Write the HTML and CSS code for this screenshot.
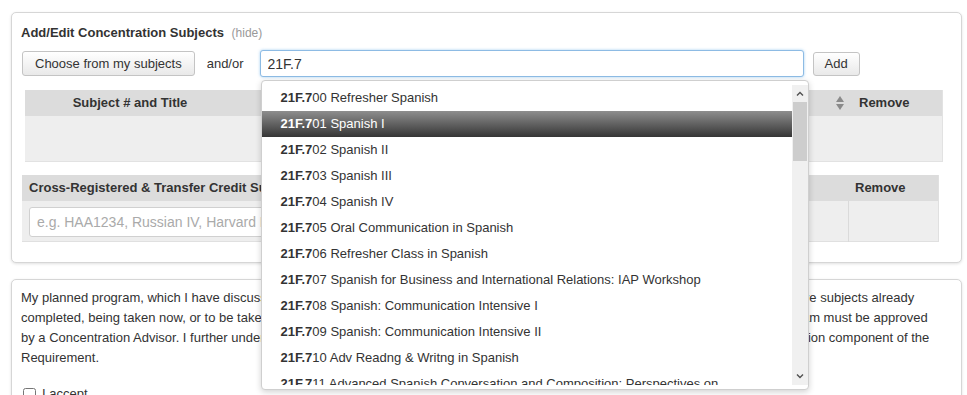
FILE: index.html
```html
<!DOCTYPE html>
<html lang="en">
<head>
  <meta charset="UTF-8" />
  <title>Concentration Proposal</title>
  <link rel="stylesheet" href="styles.css">
</head>
<body>
  <div class="panel subjects-panel">
    <div class="panel-title">Add/Edit Concentration Subjects <a class="hide-link">(hide)</a></div>

    <div class="add-row">
      <button class="btn choose-btn">Choose from my subjects</button>
      <span class="andor">and/or</span>
      <div class="search-wrap">
        <input class="search-input" type="text" value="21F.7" />
        <!-- autocomplete menu -->
        <div class="suggest">
          <ul class="suggest-list">
            <li><b>21F.7</b>00 Refresher Spanish</li>
            <li class="active"><b>21F.7</b>01 Spanish I</li>
            <li><b>21F.7</b>02 Spanish II</li>
            <li><b>21F.7</b>03 Spanish III</li>
            <li><b>21F.7</b>04 Spanish IV</li>
            <li><b>21F.7</b>05 Oral Communication in Spanish</li>
            <li><b>21F.7</b>06 Refresher Class in Spanish</li>
            <li><b>21F.7</b>07 Spanish for Business and International Relations: IAP Workshop</li>
            <li><b>21F.7</b>08 Spanish: Communication Intensive I</li>
            <li><b>21F.7</b>09 Spanish: Communication Intensive II</li>
            <li><b>21F.7</b>10 Adv Readng &amp; Writng in Spanish</li>
            <li><b>21F.7</b>11 Advanced Spanish Conversation and Composition: Perspectives on Contemporary Culture</li>
            <li><b>21F.7</b>12 Advanced Spanish Conversation and Composition</li>
          </ul>
          <div class="scrollbar">
            <div class="sb-btn">
              <svg width="8" height="5" viewBox="0 0 8 5"><polyline points="1,4.5 4,1.5 7,4.5" fill="none" stroke="#505050" stroke-width="1.4"/></svg>
            </div>
            <div class="sb-thumb"></div>
            <div class="sb-track"></div>
            <div class="sb-btn">
              <svg width="8" height="5" viewBox="0 0 8 5"><polyline points="1,0.5 4,3.5 7,0.5" fill="none" stroke="#505050" stroke-width="1.4"/></svg>
            </div>
          </div>
        </div>
      </div>
      <button class="btn add-btn">Add</button>
    </div>

    <table class="grid subj-table">
      <colgroup>
        <col style="width:210px"><col style="width:230px"><col style="width:200px"><col style="width:187px"><col style="width:90px">
      </colgroup>
      <tr>
        <th>Subject # and Title</th>
        <th>Term</th>
        <th>Units</th>
        <th class="sortable">
          <svg class="sort-icon" width="10" height="16" viewBox="0 0 10 16"><polygon points="5,1 9,7 1,7" fill="#8a8a8a"/><polygon points="1,9 9,9 5,15" fill="#8a8a8a"/></svg>
          Status
        </th>
        <th class="left">Remove</th>
      </tr>
      <tr class="empty-row">
        <td></td><td></td><td></td><td></td><td></td>
      </tr>
    </table>

    <table class="grid xreg-table">
      <colgroup>
        <col style="width:826px"><col style="width:90px">
      </colgroup>
      <tr>
        <th class="left">Cross-Registered &amp; Transfer Credit Subjects</th>
        <th class="left">Remove</th>
      </tr>
      <tr>
        <td class="xreg-cell"><input class="xreg-input" type="text" placeholder="e.g. HAA1234, Russian IV, Harvard Ec 1010a, Wellesley ..." /></td>
        <td class="remove-cell"></td>
      </tr>
    </table>
  </div>

  <div class="panel accept-panel">
    <p>My planned program, which I have discussed with my Concentration Advisor and outlined in this proposal form, includes each of the above subjects already completed, being taken now, or to be taken in future terms at MIT or Harvard. I understand that any later change or addition to this program must be approved by a Concentration Advisor. I further understand that I must also satisfactorily complete the written and oral communication and presentation component of the Requirement.</p>
    <label class="accept"><input type="checkbox" /> I accept</label>
  </div>
</body>
</html>
```

FILE: styles.css
```css
body {
  margin: 0;
  padding: 12px 5px 0 11px;
  font-family: "Liberation Sans", Arial, sans-serif;
  font-size: 13px;
  color: #333;
  background: #fff;
}
.panel {
  width: 951px;
  box-sizing: border-box;
  border: 1px solid #d6d6d6;
  border-radius: 5px;
  box-shadow: 0 1px 3px rgba(0,0,0,0.12);
  background: #fff;
}
.subjects-panel {
  padding: 11px 10px 20px 9px;
}
.panel-title {
  font-weight: bold;
  line-height: 18px;
}
.hide-link {
  font-weight: normal;
  font-size: 12px;
  color: #999;
  margin-left: 4px;
}
.add-row {
  display: flex;
  align-items: center;
  margin-top: 8px;
}
.btn {
  height: 25px;
  padding: 0 12px;
  font-family: inherit;
  font-size: 13px;
  color: #333;
  background: linear-gradient(#ffffff, #e9e9e9);
  border: 1px solid #c4c4c4;
  border-radius: 3px;
  cursor: pointer;
}
.choose-btn {
  margin-left: 1px;
}
.andor {
  margin: 0 16px 0 12px;
}
.search-wrap {
  position: relative;
}
.search-input {
  display: block;
  width: 544px;
  height: 27px;
  box-sizing: border-box;
  padding: 0 7px;
  font-family: inherit;
  font-size: 14px;
  color: #333;
  border: 1px solid #8dbbe4;
  border-radius: 3px;
  box-shadow: 0 0 3px rgba(102,175,233,0.6);
  outline: none;
}
.add-btn {
  height: 24px;
  margin-left: 9px;
  padding: 0 11px;
}

/* autocomplete */
.suggest {
  position: absolute;
  left: 1px;
  top: 30px;
  width: 548px;
  height: 310px;
  box-sizing: border-box;
  padding: 4px 0;
  display: flex;
  background: #fff;
  border: 1px solid #cfcfcf;
  border-radius: 4px;
  box-shadow: 0 2px 6px rgba(0,0,0,0.18);
  z-index: 5;
}
.suggest-list {
  flex: 1;
  margin: 0;
  padding: 0;
  list-style: none;
  overflow: hidden;
}
.suggest-list li {
  min-height: 26px;
  line-height: 26px;
  padding: 0 12px 0 19px;
  color: #333;
}
.suggest-list b {
  color: #333;
}
.suggest-list li.active {
  background: linear-gradient(#8e8e8e, #353535);
  color: #fff;
}
.suggest-list li.active b {
  color: #fff;
}
.scrollbar {
  width: 16px;
  display: flex;
  flex-direction: column;
  background: #f0f0f0;
}
.sb-btn {
  height: 17px;
  display: flex;
  align-items: center;
  justify-content: center;
}
.sb-thumb {
  height: 59px;
  margin: 0 1px;
  background: #cdcdcd;
}
.sb-track {
  flex: 1;
}

/* tables */
.grid {
  border-collapse: collapse;
  table-layout: fixed;
}
.grid th {
  height: 26px;
  padding: 0 7px;
  background: #dcdcdc;
  font-weight: bold;
  text-align: center;
  line-height: 26px;
  white-space: nowrap;
  overflow: hidden;
}
.grid th.left {
  text-align: left;
}
.grid td {
  background: #eeeeee;
  padding: 0;
}
.subj-table {
  width: 917px;
  margin: 13px 0 0 4px;
  border-right: 1px solid #e2e2e2;
  border-bottom: 1px solid #e2e2e2;
}
.subj-table .empty-row td {
  height: 45px;
}
.sortable {
  padding-right: 5px;
}
.sort-icon {
  float: right;
  margin-top: 5px;
}
.xreg-table {
  width: 916px;
  margin: 13px 0 0 1px;
  border-bottom: 1px solid #e0e0e0;
  border-right: 1px solid #e0e0e0;
}
.xreg-cell {
  padding: 6px 7px 4px !important;
}
.xreg-input {
  display: block;
  width: 640px;
  height: 30px;
  box-sizing: border-box;
  padding: 0 7px;
  font-family: inherit;
  font-size: 14px;
  border: 1px solid #d0d0d0;
  border-radius: 3px;
  background: #fff;
}
.xreg-input::placeholder {
  color: #aaa;
}
.remove-cell {
  border-left: 1px solid #dadada;
}

/* accept panel */
.accept-panel {
  margin-top: 16px;
  padding: 8px 18px 20px 9px;
}
.accept-panel p {
  margin: 0 0 16px;
  line-height: 20px;
}
.accept {
  display: flex;
  align-items: center;
  gap: 6px;
  line-height: 20px;
}
.accept input {
  width: 13px;
  height: 13px;
  margin: 0 0 0 2px;
}
```
